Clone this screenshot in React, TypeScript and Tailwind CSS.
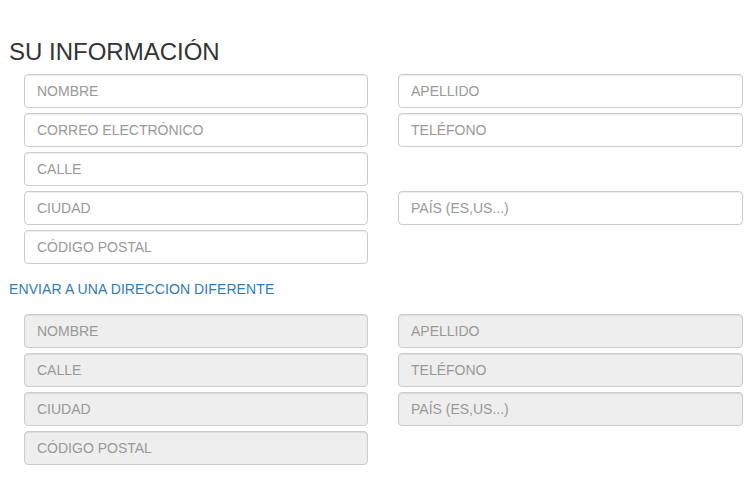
import React from "react";

const Field = ({ ph, disabled }: { ph?: string; disabled?: boolean }) =>
  ph ? (
    <input
      readOnly
      placeholder={ph}
      className={
        "block h-[34px] w-full rounded-[4px] border border-[#cccccc] px-3 text-[14px] text-[#555] outline-none placeholder:text-[#999] shadow-[inset_0_1px_1px_rgba(0,0,0,0.075)] " +
        (disabled ? "bg-[#eeeeee]" : "bg-white")
      }
    />
  ) : (
    <div className="h-[34px]" />
  );

const Grid = ({ rows, disabled }: { rows: [string, string][]; disabled?: boolean }) => (
  <div className="ml-[24px] grid w-[719px] grid-cols-[344px_345px] gap-x-[30px] gap-y-[5px]">
    {rows.map(([l, r], i) => (
      <React.Fragment key={i}>
        <Field ph={l} disabled={disabled} />
        <Field ph={r} disabled={disabled} />
      </React.Fragment>
    ))}
  </div>
);

export default function App() {
  return (
    <div className="h-[486px] w-[755px] bg-white font-['Liberation_Sans',Arial,sans-serif] text-[#333]">
      <div className="pt-[39px]">
        <h3 className="ml-[9px] text-[24px] leading-[26.4px]">SU INFORMACIÓN</h3>
        <div className="mt-[8.6px]">
          <Grid
            rows={[
              ["NOMBRE", "APELLIDO"],
              ["CORREO ELECTRÓNICO", "TELÉFONO"],
              ["CALLE", ""],
              ["CIUDAD", "PAÍS (ES,US...)"],
              ["CÓDIGO POSTAL", ""],
            ]}
          />
        </div>
        <a className="ml-[9px] mt-[15px] block text-[14px] leading-[20px] tracking-[0.1px] text-[#337ab7]">
          ENVIAR A UNA DIRECCION DIFERENTE
        </a>
        <div className="mt-[15px]">
          <Grid
            disabled
            rows={[
              ["NOMBRE", "APELLIDO"],
              ["CALLE", "TELÉFONO"],
              ["CIUDAD", "PAÍS (ES,US...)"],
              ["CÓDIGO POSTAL", ""],
            ]}
          />
        </div>
      </div>
    </div>
  );
}
